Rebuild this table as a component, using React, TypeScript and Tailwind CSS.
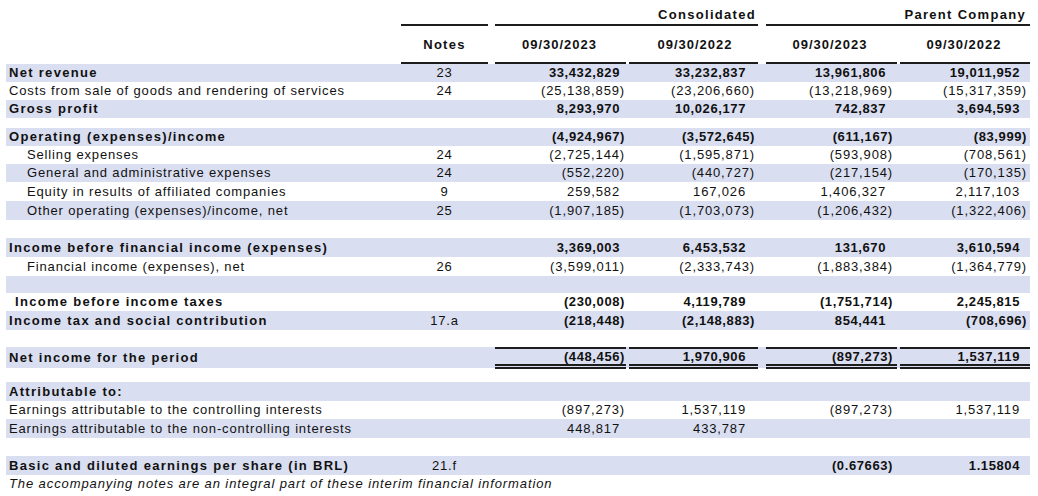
import clsx from "clsx";

type Row = {
  label?: string;
  note?: string;
  vals?: (string | null)[];
  bold?: boolean;
  band?: boolean;
  indent?: "sub" | "mid";
  h: string;
  total?: boolean;
};

const cols = "grid grid-cols-[392px_93px_137px_134px_136px_132px]";

// right padding of figures per column: negatives carry ")" further right
const negPad = ["pr-[3px]", "pr-[7px]", "pr-[5px]", "pr-[3px]"];
const posPad = ["pr-[8px]", "pr-[16px]", "pr-[12px]", "pr-[10px]"];
const lineMx = ["ml-[4px] mr-[2px]", "ml-[1px] mr-[4px]", "ml-[4px] mr-[1px]", "ml-[2px]"];

const rows: Row[] = [
  { label: "Net revenue", note: "23", vals: ["33,432,829", "33,232,837", "13,961,806", "19,011,952"], bold: true, band: true, h: "h-[18px]" },
  { label: "Costs from sale of goods and rendering of services", note: "24", vals: ["(25,138,859)", "(23,206,660)", "(13,218,969)", "(15,317,359)"], h: "h-[18px]" },
  { label: "Gross profit", vals: ["8,293,970", "10,026,177", "742,837", "3,694,593"], bold: true, band: true, h: "h-[18px]" },
  { h: "h-[10px]" },
  { label: "Operating (expenses)/income", vals: ["(4,924,967)", "(3,572,645)", "(611,167)", "(83,999)"], bold: true, band: true, h: "h-[18px]" },
  { label: "Selling expenses", note: "24", vals: ["(2,725,144)", "(1,595,871)", "(593,908)", "(708,561)"], indent: "sub", h: "h-[18px]" },
  { label: "General and administrative expenses", note: "24", vals: ["(552,220)", "(440,727)", "(217,154)", "(170,135)"], indent: "sub", band: true, h: "h-[18px]" },
  { label: "Equity in results of affiliated companies", note: "9", vals: ["259,582", "167,026", "1,406,327", "2,117,103"], indent: "sub", h: "h-[19px]" },
  { label: "Other operating (expenses)/income, net", note: "25", vals: ["(1,907,185)", "(1,703,073)", "(1,206,432)", "(1,322,406)"], indent: "sub", band: true, h: "h-[19px]" },
  { h: "h-[18px]" },
  { label: "Income before financial income (expenses)", vals: ["3,369,003", "6,453,532", "131,670", "3,610,594"], bold: true, band: true, h: "h-[19px]" },
  { label: "Financial income (expenses), net", note: "26", vals: ["(3,599,011)", "(2,333,743)", "(1,883,384)", "(1,364,779)"], indent: "sub", h: "h-[19px]" },
  { band: true, h: "h-[17px]" },
  { label: "Income before income taxes", vals: ["(230,008)", "4,119,789", "(1,751,714)", "2,245,815"], bold: true, indent: "mid", h: "h-[18px]" },
  { label: "Income tax and social contribution", note: "17.a", vals: ["(218,448)", "(2,148,883)", "854,441", "(708,696)"], bold: true, band: true, h: "h-[19px]" },
  { h: "h-[17px]" },
  { label: "Net income for the period", vals: ["(448,456)", "1,970,906", "(897,273)", "1,537,119"], bold: true, band: true, total: true, h: "h-[21px]" },
  { h: "h-[14px]" },
  { label: "Attributable to:", bold: true, band: true, h: "h-[19px]" },
  { label: "Earnings attributable to the controlling interests", vals: ["(897,273)", "1,537,119", "(897,273)", "1,537,119"], h: "h-[18px]" },
  { label: "Earnings attributable to the non-controlling interests", vals: ["448,817", "433,787", null, null], band: true, h: "h-[19px]" },
  { h: "h-[18px]" },
  { label: "Basic and diluted earnings per share (in BRL)", note: "21.f", vals: [null, null, "(0.67663)", "1.15804"], bold: true, band: true, h: "h-[19px]" },
];

function Num({ v, col }: { v: string | null; col: number }) {
  if (!v) return null;
  const neg = v.startsWith("(");
  return <div className={clsx("text-right", neg ? negPad[col] : posPad[col])}>{v}</div>;
}

function StatementRow({ r }: { r: Row }) {
  const track = r.bold ? "font-bold tracking-[1.3px]" : "tracking-[0.85px]";
  const numTrack = r.bold ? "font-bold tracking-[0.6px]" : "tracking-[0.85px]";
  return (
    <div className={clsx(cols, r.h, r.band && "bg-[#d9def0]")}>
      <div className={clsx("flex items-center whitespace-nowrap pb-[1px]", track, r.indent === "sub" ? "pl-[21px]" : r.indent === "mid" ? "pl-[9px]" : "pl-[3px]")}>
        {r.label}
      </div>
      <div className="flex items-center justify-center pb-[1px] tracking-[0.8px]">{r.note}</div>
      {[0, 1, 2, 3].map((i) =>
        r.total ? (
          <div key={i} className={clsx("flex flex-col", numTrack)}>
            <div className={clsx("h-[2px] bg-[#1c1c1c]", lineMx[i])} />
            <div className="flex flex-1 items-center justify-end">
              <div className="w-full">
                <Num v={r.vals?.[i] ?? null} col={i} />
              </div>
            </div>
            <div className={clsx("h-[1.5px] bg-[#1c1c1c]", lineMx[i])} />
            <div className="h-[1.5px]" />
            <div className={clsx("h-[1.5px] bg-[#1c1c1c]", lineMx[i])} />
          </div>
        ) : (
          <div key={i} className={clsx("flex items-center pb-[1px]", numTrack)}>
            <div className="w-full">
              <Num v={r.vals?.[i] ?? null} col={i} />
            </div>
          </div>
        )
      )}
    </div>
  );
}

export default function App() {
  return (
    <div className="w-[1038px] h-[496px] overflow-hidden bg-white text-[13px] leading-[15px] text-[#111] font-['Liberation_Sans',Arial,sans-serif]">
      <div className="pl-[6px] w-[1030px]">
        {/* column group heading */}
        <div className={clsx(cols, "h-[26px]")}>
          <div />
          <div className="flex flex-col justify-end">
            <div className="mx-[3px] h-[2px] bg-[#1c1c1c]" />
          </div>
          <div className="col-span-2 flex flex-col justify-end">
            <div className="pr-[6px] pb-[2px] text-right font-bold tracking-[1.3px]">Consolidated</div>
            <div className="ml-[4px] mr-[4px] h-[2px] bg-[#1c1c1c]" />
          </div>
          <div className="col-span-2 flex flex-col justify-end">
            <div className="pr-[4px] pb-[2px] text-right font-bold tracking-[1.3px]">Parent Company</div>
            <div className="ml-[4px] h-[2px] bg-[#1c1c1c]" />
          </div>
        </div>
        {/* dates heading */}
        <div className={clsx(cols, "h-[38px] font-bold tracking-[1px]")}>
          <div />
          <div className="flex flex-col">
            <div className="flex flex-1 items-center justify-center tracking-[1.3px]">Notes</div>
            <div className="mx-[3px] h-[2px] bg-[#1c1c1c]" />
          </div>
          {["09/30/2023", "09/30/2022", "09/30/2023", "09/30/2022"].map((d, i) => (
            <div key={i} className="flex flex-col">
              <div className="flex flex-1 items-center justify-center">{d}</div>
              <div className={clsx("h-[2px] bg-[#1c1c1c]", lineMx[i])} />
            </div>
          ))}
        </div>
        {rows.map((r, i) => (
          <StatementRow key={i} r={r} />
        ))}
        <div className="h-[17px] flex items-center pl-[3px] italic tracking-[0.9px] whitespace-nowrap">
          The accompanying notes are an integral part of these interim financial information
        </div>
      </div>
    </div>
  );
}
